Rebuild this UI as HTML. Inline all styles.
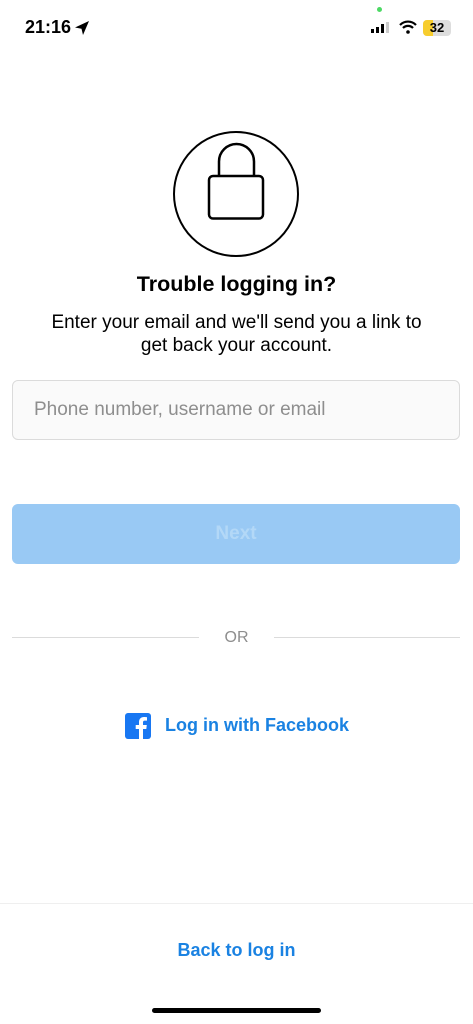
<!DOCTYPE html>
<html><head><meta charset="utf-8"><style>
*{margin:0;padding:0;box-sizing:border-box}
body{width:473px;height:1024px;background:#fff;font-family:"Liberation Sans",sans-serif;position:relative;overflow:hidden;color:#000}
.a{position:absolute}
</style></head><body>
<div class="a" style="left:25px;top:17px;font-size:18px;font-weight:bold">21:16</div>
<svg class="a" style="left:74px;top:20px" width="16" height="16" viewBox="0 0 16 16"><path d="M15 1L1 7.5l6.5 1.2L9 15z" fill="#000"/></svg>
<div class="a" style="left:377px;top:7px;width:5px;height:5px;border-radius:50%;background:#4cd964"></div>
<svg class="a" style="left:371px;top:22px" width="22" height="12"><rect x="0" y="7" width="3" height="4" fill="#000"/><rect x="5" y="5" width="3" height="6" fill="#000"/><rect x="10" y="2" width="3" height="9" fill="#000"/><rect x="15" y="0" width="3" height="11" fill="#ccc"/></svg>
<svg class="a" style="left:399px;top:20px" width="18" height="14" viewBox="0 0 18 14"><path d="M1 5a11 11 0 0 1 16 0" stroke="#000" stroke-width="2.2" fill="none"/><path d="M4 8a7 7 0 0 1 10 0" stroke="#000" stroke-width="2.2" fill="none"/><circle cx="9" cy="12" r="1.8" fill="#000"/></svg>
<div class="a" style="left:423px;top:20px;width:28px;height:16px;border-radius:4px;background:#ddd;overflow:hidden"><div style="width:10px;height:16px;background:#f7cd2e"></div></div>
<div class="a" style="left:423px;top:20px;width:28px;height:16px;font-size:13px;font-weight:bold;text-align:center;line-height:16px">32</div>
<div class="a" style="left:173px;top:131px;width:126px;height:126px;border:2.5px solid #000;border-radius:50%"></div>
<svg class="a" style="left:200px;top:140px" width="72" height="84" viewBox="0 0 72 84"><path d="M19 36V21.5a17.5 17.5 0 0 1 35 0V36" stroke="#000" stroke-width="2.5" fill="none"/><rect x="9" y="36" width="54" height="42.5" rx="4" stroke="#000" stroke-width="2.5" fill="none"/></svg>
<div class="a" style="left:0;top:272px;width:473px;text-align:center;font-size:21.5px;font-weight:bold">Trouble logging in?</div>
<div class="a" style="left:0;top:311px;width:473px;text-align:center;font-size:19px;line-height:23px">Enter your email and we'll send you a link to<br>get back your account.</div>
<div class="a" style="left:12px;top:380px;width:448px;height:60px;border:1px solid #dbdbdb;border-radius:6px;background:#fafafa;font-size:19px;color:#8e8e8e;padding:18px 0 0 21px">Phone number, username or email</div>
<div class="a" style="left:12px;top:504px;width:448px;height:60px;border-radius:6px;background:#99c9f4;font-size:19px;font-weight:bold;color:#b3d8f7;text-align:center;line-height:60px">Next</div>
<div class="a" style="left:12px;top:637px;width:187px;height:1px;background:#dbdbdb"></div>
<div class="a" style="left:274px;top:637px;width:186px;height:1px;background:#dbdbdb"></div>
<div class="a" style="left:0;top:629px;width:473px;text-align:center;font-size:16px;color:#8e8e8e">OR</div>
<svg class="a" style="left:125px;top:713px" width="26" height="26" viewBox="0 0 26 26"><rect width="26" height="26" rx="3" fill="#1877f2"/><path d="M18 26V16h3.3l.5-4H18V9.5c0-1.1.4-1.9 2-1.9h2V4.2c-.4 0-1.6-.2-3-.2-3 0-5 1.800-5 5.200V12h-3.300v4H14v10z" fill="#fff"/></svg>
<div class="a" style="left:165px;top:715px;font-size:18px;font-weight:bold;color:#1a82e2">Log in with Facebook</div>
<div class="a" style="left:0;top:903px;width:473px;height:1px;background:#efefef"></div>
<div class="a" style="left:0;top:940px;width:473px;text-align:center;font-size:18px;font-weight:bold;color:#1a82e2">Back to log in</div>
<div class="a" style="left:152px;top:1008px;width:169px;height:5px;border-radius:3px;background:#000"></div>
</body></html>
